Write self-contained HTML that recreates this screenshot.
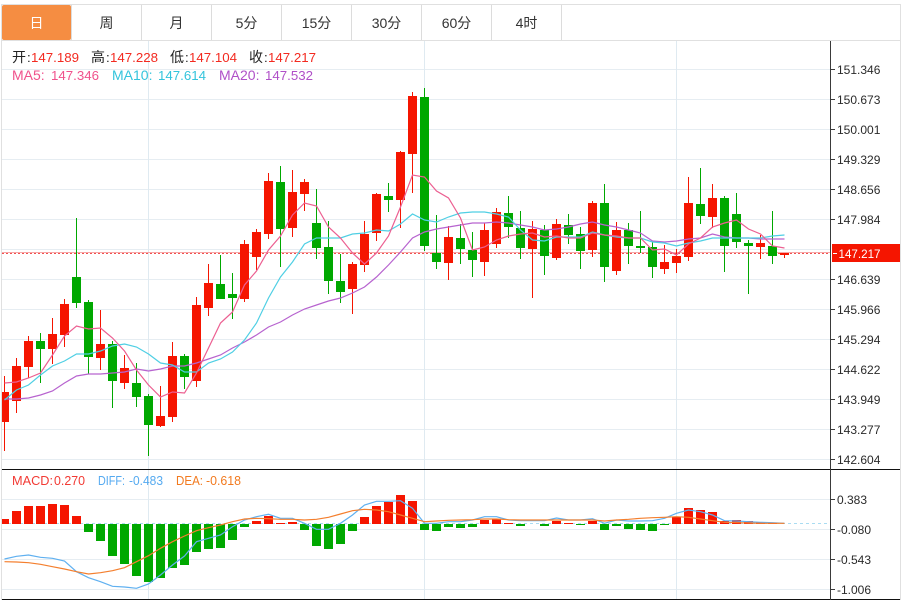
<!DOCTYPE html>
<html>
<head>
<meta charset="utf-8">
<style>
html,body{margin:0;padding:0;background:#fff;width:910px;height:600px;overflow:hidden}
svg{display:block}
text{font-family:"Liberation Sans","Noto Sans CJK SC",sans-serif}
.tab{font-size:14px;fill:#333;text-anchor:middle}
.ax{font-size:12px;fill:#2a2a2a}
.t{font-size:13.3px}
.l{font-size:14px}
.m{font-size:12.5px}
</style>
</head>
<body>
<svg width="910" height="600" viewBox="0 0 910 600" xmlns="http://www.w3.org/2000/svg">
<defs><clipPath id="c"><rect x="2" y="41" width="828" height="558"/></clipPath></defs>
<!-- frame -->
<path d="M1 4.5H901M1.5 4V600M900.5 4V600M2 40.5H900" stroke="#e0e0e0" fill="none"/>
<rect x="2" y="5" width="69" height="35" rx="2" fill="#f58d42"/>
<path d="M71.5 5V40M141.5 5V40M211.5 5V40M281.5 5V40M351.5 5V40M421.5 5V40M491.5 5V40M561.5 5V40" stroke="#dcdcdc" fill="none"/>
<text class="tab" x="36.5" y="28" style="fill:#fff">日</text>
<text class="tab" x="106.5" y="28">周</text>
<text class="tab" x="176.5" y="28">月</text>
<text class="tab" x="246.5" y="28">5分</text>
<text class="tab" x="316.5" y="28">15分</text>
<text class="tab" x="386.5" y="28">30分</text>
<text class="tab" x="456.5" y="28">60分</text>
<text class="tab" x="526.5" y="28">4时</text>
<!-- grid -->
<path d="M2 69.5H830M2 99.5H830M2 129.5H830M2 159.5H830M2 189.5H830M2 219.5H830M2 249.5H830M2 279.5H830M2 309.5H830M2 339.5H830M2 369.5H830M2 399.5H830M2 429.5H830M2 459.5H830M2 499.5H830M2 529.5H830M2 559.5H830M2 589.5H830" stroke="#e6edf2" fill="none"/>
<path d="M148.5 41V599M424.5 41V599M676.5 41V599" stroke="#dfeaf1" fill="none"/>
<g clip-path="url(#c)">
<!-- price dotted line -->
<path d="M2 252.5H830" stroke="#f7a9a9" fill="none"/>
<path d="M2 253.5H830" stroke="#f05050" stroke-dasharray="2 2" fill="none"/>
<!-- red wicks -->
<path fill="none" stroke="#f51500" d="M4.5 376V451M16.5 358V413M28.5 336V378M52.5 318V364M64.5 299V347M100.5 310V370M124.5 355V389M160.5 386V427M172.5 342V422M196.5 297V387M208.5 264V316M244.5 240V302M256.5 229V270M268.5 173V239M292.5 170V237M304.5 179V211M352.5 262V314M364.5 221V272M376.5 193V241M400.5 151V228M412.5 92V193M448.5 226V280M484.5 223V276M496.5 208V248M532.5 221V298M556.5 219V260M592.5 201V257M616.5 222V275M664.5 245V274M676.5 249V273M688.5 177V261M712.5 184V228M760.5 235V259M784.5 253V258"/>
<!-- red bodies -->
<path fill="#f51500" d="M0 392h9v30h-9zM12 366h9v35h-9zM24 341h9v26h-9zM48 334h9v15h-9zM60 304h9v31h-9zM96 344h9v14h-9zM120 368h9v15h-9zM156 416h9v10h-9zM168 356h9v61h-9zM192 305h9v76h-9zM204 283h9v25h-9zM240 244h9v55h-9zM252 232h9v25h-9zM264 181h9v53h-9zM288 192h9v36h-9zM300 182h9v12h-9zM348 264h9v25h-9zM360 234h9v31h-9zM372 194h9v39h-9zM396 152h9v48h-9zM408 96h9v58h-9zM444 237h9v26h-9zM480 230h9v32h-9zM492 212h9v32h-9zM528 229h9v20h-9zM552 224h9v34h-9zM588 203h9v47h-9zM612 230h9v41h-9zM660 262h9v7h-9zM672 256h9v7h-9zM684 203h9v54h-9zM708 198h9v19h-9zM756 243h9v4h-9zM780 253h9v2h-9z"/>
<!-- green wicks -->
<path fill="none" stroke="#00a800" d="M40.5 333V383M76.5 218V308M88.5 300V374M112.5 341V408M136.5 363V407M148.5 394V456M184.5 354V389M220.5 255V299M232.5 273V319M280.5 166V267M316.5 189V259M328.5 221V294M340.5 254V303M388.5 183V212M424.5 88V251M436.5 215V269M460.5 224V264M472.5 232V277M508.5 196V238M520.5 211V259M544.5 225V275M568.5 214V244M580.5 227V269M604.5 184V282M628.5 223V264M640.5 211V253M652.5 242V278M700.5 168V224M724.5 196V272M736.5 193V248M748.5 240V294M772.5 211V264"/>
<!-- green bodies -->
<path fill="#00a800" d="M36 341h9v8h-9zM72 277h9v26h-9zM84 302h9v55h-9zM108 344h9v37h-9zM132 383h9v14h-9zM144 396h9v29h-9zM180 356h9v21h-9zM216 284h9v15h-9zM228 294h9v4h-9zM276 182h9v47h-9zM312 223h9v25h-9zM324 247h9v34h-9zM336 281h9v11h-9zM384 196h9v4h-9zM420 97h9v149h-9zM432 253h9v9h-9zM456 238h9v11h-9zM468 250h9v10h-9zM504 213h9v14h-9zM516 228h9v20h-9zM540 230h9v26h-9zM564 225h9v10h-9zM576 234h9v17h-9zM600 203h9v64h-9zM624 230h9v16h-9zM636 246h9v2h-9zM648 247h9v20h-9zM696 204h9v12h-9zM720 198h9v48h-9zM732 214h9v28h-9zM744 243h9v3h-9zM768 246h9v10h-9z"/>
<!-- MA20 -->
<polyline fill="none" stroke="#b763cf" stroke-width="1.2" points="4.5,399 16.5,399 28.5,398 40.5,395 52.5,391 64.5,383 76.5,376 88.5,374 100.5,374 112.5,373 124.5,372 136.5,369 148.5,371 160.5,369 172.5,366 184.5,366 196.5,363 208.5,359 220.5,355 232.5,348 244.5,342 256.5,335 268.5,327 280.5,322 292.5,315 304.5,309 316.5,305 328.5,301 340.5,298 352.5,293 364.5,287 376.5,277 388.5,265 400.5,252 412.5,238 424.5,232 436.5,229 448.5,227 460.5,225 472.5,223 484.5,223 496.5,222 508.5,223 520.5,225 532.5,227 544.5,230 556.5,229 568.5,227 580.5,224 592.5,222 604.5,225 616.5,227 628.5,230 640.5,233 652.5,241 664.5,242 676.5,241 688.5,239 700.5,238 712.5,234 724.5,237 736.5,238 748.5,238 760.5,239 772.5,239 784.5,239"/>
<!-- MA10 -->
<polyline fill="none" stroke="#4fcfe4" stroke-width="1.2" points="4.5,400 16.5,390 28.5,385 40.5,375 52.5,366 64.5,361 76.5,354 88.5,354 100.5,351 112.5,346 124.5,344 136.5,347 148.5,354 160.5,363 172.5,365 184.5,372 196.5,372 208.5,363 220.5,359 232.5,352 244.5,340 256.5,323 268.5,298 280.5,277 292.5,262 304.5,244 316.5,238 328.5,238 340.5,238 352.5,234 364.5,233 376.5,230 388.5,231 400.5,224 412.5,214 424.5,220 436.5,222 448.5,217 460.5,213 472.5,212 484.5,212 496.5,214 508.5,217 520.5,230 532.5,240 544.5,241 556.5,237 568.5,237 580.5,237 592.5,232 604.5,235 616.5,237 628.5,238 640.5,238 652.5,242 664.5,243 676.5,246 688.5,243 700.5,241 712.5,238 724.5,238 736.5,238 748.5,238 760.5,238 772.5,236 784.5,235"/>
<!-- MA5 -->
<polyline fill="none" stroke="#ec5f91" stroke-width="1.2" points="4.5,383 16.5,382 28.5,378 40.5,373 52.5,355 64.5,336 76.5,326 88.5,329 100.5,328 112.5,338 124.5,351 136.5,370 148.5,385 160.5,397 172.5,392 184.5,393 196.5,373 208.5,348 220.5,323 232.5,312 244.5,285 256.5,271 268.5,250 280.5,236 292.5,215 304.5,203 316.5,206 328.5,227 340.5,238 352.5,253 364.5,264 376.5,253 388.5,236 400.5,207 412.5,175 424.5,177 436.5,191 448.5,198 460.5,218 472.5,250 484.5,247 496.5,240 508.5,236 520.5,234 532.5,233 544.5,237 556.5,236 568.5,238 580.5,238 592.5,233 604.5,235 616.5,236 628.5,238 640.5,238 652.5,250 664.5,249 676.5,255 688.5,244 700.5,238 712.5,227 724.5,223 736.5,220 748.5,229 760.5,234 772.5,246 784.5,248"/>
<!-- MACD zero -->
<path d="M2 523.5H830" stroke="#a9dcf2" stroke-dasharray="3 3" fill="none"/>
<!-- MACD red -->
<path fill="#f51500" d="M0 519h9v5h-9zM12 511h9v13h-9zM24 506h9v18h-9zM36 506h9v18h-9zM48 504h9v20h-9zM60 505h9v19h-9zM72 516h9v8h-9zM252 521h9v3h-9zM264 516h9v8h-9zM276 523h9v1h-9zM288 522h9v2h-9zM360 517h9v7h-9zM372 506h9v18h-9zM384 502h9v22h-9zM396 495h9v29h-9zM408 501h9v23h-9zM480 520h9v4h-9zM492 519h9v5h-9zM504 523h9v1h-9zM552 521h9v3h-9zM564 523h9v1h-9zM588 521h9v3h-9zM672 517h9v7h-9zM684 508h9v16h-9zM696 510h9v14h-9zM708 512h9v12h-9zM720 521h9v3h-9zM732 520h9v4h-9zM744 521h9v3h-9zM756 522h9v2h-9zM768 523h9v1h-9z"/>
<!-- MACD green -->
<path fill="#00a800" d="M84 524h9v8h-9zM96 524h9v17h-9zM108 524h9v32h-9zM120 524h9v40h-9zM132 524h9v52h-9zM144 524h9v58h-9zM156 524h9v54h-9zM168 524h9v44h-9zM180 524h9v41h-9zM192 524h9v28h-9zM204 524h9v25h-9zM216 524h9v24h-9zM228 524h9v16h-9zM240 524h9v3h-9zM300 524h9v6h-9zM312 524h9v22h-9zM324 524h9v25h-9zM336 524h9v20h-9zM348 524h9v7h-9zM420 524h9v6h-9zM432 524h9v7h-9zM444 524h9v3h-9zM456 524h9v4h-9zM468 524h9v3h-9zM516 524h9v2h-9zM540 524h9v2h-9zM576 524h9v1h-9zM600 524h9v6h-9zM612 524h9v2h-9zM624 524h9v5h-9zM636 524h9v6h-9zM648 524h9v7h-9zM660 524h9v1h-9z"/>
<!-- DIFF -->
<polyline fill="none" stroke="#5fb0f0" stroke-width="1.2" points="4.5,559 16.5,556.3 28.5,555 40.5,557.3 52.5,558.3 64.5,561 76.5,571.7 88.5,577.7 100.5,581.7 112.5,586.3 124.5,587 136.5,588.3 148.5,584 160.5,575 172.5,565 184.5,556 196.5,541.7 208.5,538.3 220.5,535 232.5,526.7 244.5,520 256.5,516.7 268.5,514.3 280.5,518.3 292.5,518.3 304.5,523.3 316.5,529.3 328.5,529.3 340.5,523.3 352.5,515 364.5,505 376.5,501.3 388.5,501.3 400.5,500.7 412.5,508.3 424.5,523.3 436.5,523.3 448.5,521.7 460.5,521.7 472.5,520 484.5,516.7 496.5,516.7 508.5,520 520.5,520.7 532.5,520.7 544.5,520.7 556.5,518 568.5,520 580.5,520 592.5,518.7 604.5,523.3 616.5,520 628.5,521 640.5,521 652.5,520.7 664.5,518.3 676.5,513.3 688.5,510 700.5,511.7 712.5,515 724.5,520.7 736.5,521 748.5,521.7 760.5,522.3 772.5,522.7 784.5,523.3"/>
<!-- DEA -->
<polyline fill="none" stroke="#f47f2e" stroke-width="1.2" points="4.5,561.7 16.5,562 28.5,562.7 40.5,564.3 52.5,566.7 64.5,569 76.5,571.7 88.5,574 100.5,572.7 112.5,570.7 124.5,567.7 136.5,561.7 148.5,555.7 160.5,548.3 172.5,541.7 184.5,536 196.5,530.7 208.5,527.7 220.5,525 232.5,521.7 244.5,519 256.5,518.3 268.5,518.7 280.5,519.3 292.5,519.3 304.5,520 316.5,519.3 328.5,517.3 340.5,514 352.5,510.7 364.5,509.3 376.5,510 388.5,511.7 400.5,515 412.5,518.3 424.5,521.7 436.5,521 448.5,520.3 460.5,520 472.5,519.7 484.5,519 496.5,519 508.5,519.7 520.5,520 592.5,520 604.5,521 616.5,520 628.5,519.3 640.5,518.3 652.5,517.7 664.5,517.3 676.5,516.7 688.5,517.3 700.5,519 712.5,520.7 724.5,522.3 736.5,522.7 748.5,523 760.5,523.3 772.5,523.3 784.5,523.3"/>
</g>
<!-- separators -->
<path d="M2 469.5H900M2 599.5H900" stroke="#111" fill="none"/>
<path d="M830.5 41V600" stroke="#3a3a3a" fill="none"/>
<path d="M831 69.5h4M831 99.5h4M831 129.5h4M831 159.5h4M831 189.5h4M831 219.5h4M831 279.5h4M831 309.5h4M831 339.5h4M831 369.5h4M831 399.5h4M831 429.5h4M831 459.5h4M831 499.5h4M831 529.5h4M831 559.5h4M831 589.5h4" stroke="#3a3a3a" fill="none"/>
<!-- axis labels -->
<text class="ax" x="837" y="74">151.346</text>
<text class="ax" x="837" y="104">150.673</text>
<text class="ax" x="837" y="134">150.001</text>
<text class="ax" x="837" y="164">149.329</text>
<text class="ax" x="837" y="194">148.656</text>
<text class="ax" x="837" y="224">147.984</text>
<text class="ax" x="837" y="284">146.639</text>
<text class="ax" x="837" y="314">145.966</text>
<text class="ax" x="837" y="344">145.294</text>
<text class="ax" x="837" y="374">144.622</text>
<text class="ax" x="837" y="404">143.949</text>
<text class="ax" x="837" y="434">143.277</text>
<text class="ax" x="837" y="464">142.604</text>
<text class="ax" x="837" y="504">0.383</text>
<text class="ax" x="837" y="534">-0.080</text>
<text class="ax" x="837" y="564">-0.543</text>
<text class="ax" x="837" y="594">-1.006</text>
<!-- price tag -->
<rect x="832" y="244" width="68" height="18" fill="#f51500"/>
<path d="M833 253.5h4" stroke="#fff" fill="none"/>
<text class="ax" x="838.5" y="258" textLength="42" lengthAdjust="spacingAndGlyphs" style="fill:#fff">147.217</text>
<!-- info text -->
<text class="t" y="62" fill="#222"><tspan x="12" font-size="14">开</tspan><tspan x="27">:</tspan><tspan x="91" font-size="14">高</tspan><tspan x="106">:</tspan><tspan x="170" font-size="14">低</tspan><tspan x="185">:</tspan><tspan x="249" font-size="14">收</tspan><tspan x="264">:</tspan></text>
<text class="t" y="62" fill="#f32a20"><tspan x="31">147.189</tspan><tspan x="110">147.228</tspan><tspan x="189">147.104</tspan><tspan x="268">147.217</tspan></text>
<text class="l" x="12" y="80" fill="#f0528c">MA5:</text>
<text class="t" x="51" y="80" fill="#f0528c">147.346</text>
<text class="l" x="112" y="80" fill="#33c4dc">MA10:</text>
<text class="t" x="158" y="80" fill="#33c4dc">147.614</text>
<text class="l" x="219" y="80" fill="#b050c8">MA20:</text>
<text class="t" x="265" y="80" fill="#b050c8">147.532</text>
<text class="m" x="12" y="485" fill="#f23a34" textLength="41" lengthAdjust="spacingAndGlyphs">MACD:</text>
<text class="m" x="54" y="485" fill="#f23a34" textLength="31" lengthAdjust="spacingAndGlyphs">0.270</text>
<text class="m" x="98" y="485" fill="#55aaf0" textLength="27" lengthAdjust="spacingAndGlyphs">DIFF:</text>
<text class="m" x="129" y="485" fill="#55aaf0" textLength="34" lengthAdjust="spacingAndGlyphs">-0.483</text>
<text class="m" x="176" y="485" fill="#f27a1f" textLength="27" lengthAdjust="spacingAndGlyphs">DEA:</text>
<text class="m" x="206" y="485" fill="#f27a1f" textLength="35" lengthAdjust="spacingAndGlyphs">-0.618</text>
</svg>
</body>
</html>
